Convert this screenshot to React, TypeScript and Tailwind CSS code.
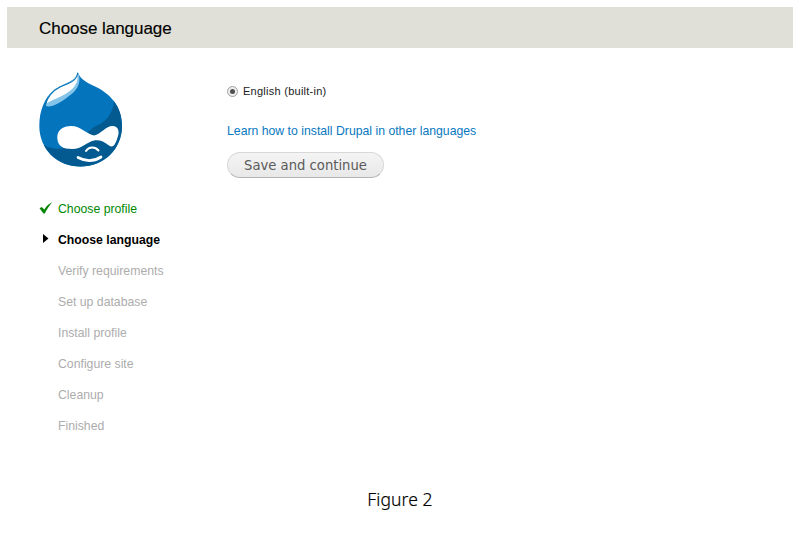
const steps = ['Verify requirements', 'Set up database', 'Install profile', 'Configure site', 'Cleanup', 'Finished'];

function Druplicon() {
  return (
    <svg className="ml-[-1px] block h-[98px] w-[86px]" viewBox="38 70 86 98" aria-label="Drupal">
      <defs>
        <clipPath id="drop">
          <path d="M77.7 72C80 79 86 82 93 85.5C110 93 122 106 122 126C122 149 104 166.5 80.5 166.5C57 166.5 39.3 149 39.3 126C39.3 110 45 97 54 90C64 83 76 82 77.7 72Z" />
        </clipPath>
      </defs>
      <g clipPath="url(#drop)">
        <rect x="38" y="70" width="86" height="98" fill="#0475bd" />
        <path d="M114 101C113 114 106 122 94 127L72 145C63 150 53 150 44 145V168H124V101Z" fill="#025a91" />
        <path d="M77.7 70C82 82 78 90 69 96C60 103 51 108 46 106C46 100 50 91 58 87C67 82 76 80 77.7 70Z" fill="#85c4e9" />
        <path d="M77 74C79 81 75 88 67 93C59 98 52 100 47 103C46 100 51 92 59 88C67 84 75 82 77 74Z" fill="#fff" />
      </g>
      <path d="M77.7 73C77 81 69 83 60 87C52 91 48 96 45 105" fill="none" stroke="#0b75b5" strokeWidth="1.1" />
      <path d="M57.3 138C57 130 63 126 71 126C81 126 87 134.5 94 135.5C101 134 106 126 112.5 126C118.5 126 119.5 132 118 136C116 143 113.5 149 109 145.5C103.5 141 99 139.5 94 140.5C87 142 82 149 72 149C63 149 57.5 146 57.3 138Z" fill="#fff" />
      <g fill="none" stroke="#fff" strokeLinecap="round">
        <path d="M86 151C89 146.5 95 146.5 98.5 150.5" strokeWidth="2" />
        <path d="M78 157.5Q90 164 101 157" strokeWidth="2.7" />
      </g>
    </svg>
  );
}

export default function App() {
  return (
    <div className="flex h-[539px] w-[800px] flex-col bg-white p-[7px] font-['Liberation_Sans',Arial,sans-serif] text-[12.25px]">
      <header className="flex h-[41px] shrink-0 items-center bg-[#e0e0d8] pl-8 pt-[2px]">
        <h1 className="text-[17px] leading-5 tracking-[-0.04px] text-black [-webkit-text-stroke:0.15px]">Choose language</h1>
      </header>
      <div className="flex h-[430px] shrink-0 pl-8 pt-[22px]">
        <aside className="w-[188px] shrink-0">
          <Druplicon />
          <ol className="pt-[26px] leading-[31px] text-[#adadad]">
            <li className="flex h-[31px] items-center text-[#008800]">
              <svg className="mr-[5px] mt-[-3px] h-3 w-[14px]" viewBox="0 0 14 12">
                <path d="M.5 6.3L2.8 5L5.3 7.6C7.5 4 10 1.7 13.3.3C10 4 7.5 8 5.8 11.4H4.4Z" fill="#078507" />
              </svg>
              <span>Choose profile</span>
            </li>
            <li className="flex h-[31px] items-center font-bold text-black">
              <svg className="ml-1 mr-[9px] mt-[-5px] h-[9px] w-[6px]" viewBox="0 0 6 8" preserveAspectRatio="none">
                <path d="M0 0L5.5 4L0 8Z" />
              </svg>
              <span>Choose language</span>
            </li>
            {steps.map((step) => (
              <li className="h-[31px] pl-[19px]" key={step}>{step}</li>
            ))}
          </ol>
        </aside>
        <main className="pt-[14px]">
          <label className="flex h-[14px] items-center text-[11px] tracking-[0.26px] text-[#222]">
            <span className="mr-[5px] flex size-[11px] items-center justify-center rounded-full border border-[#a0a0a0] bg-[#eeeeee]">
              <span className="size-[5px] rounded-full bg-[#505050]" />
            </span>
            English (built-in)
          </label>
          <a className="mt-[23px] block h-5 leading-5 text-[#0878bf]">Learn how to install Drupal in other languages</a>
          <button className="mt-[11px] flex h-[26px] w-[157px] items-center justify-center rounded-full border border-[#d8d8d8] border-b-[#b4b4b4] bg-linear-to-b from-[#f4f4f4] to-[#e8e8e8] pt-[2px] font-['DejaVu_Sans',sans-serif] text-[13.2px] text-[#5a5a5a]">Save and continue</button>
        </main>
      </div>
      <p className="pt-[9px] text-center font-['Noto_Sans',sans-serif] text-[17.5px] font-light leading-6 tracking-[0.1px] text-black [-webkit-text-stroke:0.2px]">Figure 2</p>
    </div>
  );
}
